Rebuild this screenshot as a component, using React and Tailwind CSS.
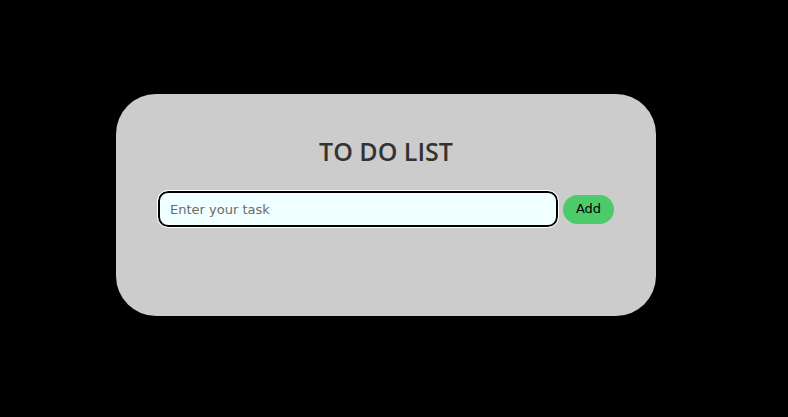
import React, { useState } from 'react';

const App = () => {
  const [task, setTask] = useState('');

  return (
    <div className="min-h-screen w-full bg-black pt-[94px]">
      <div className="ml-[116px] w-[540px] h-[222px] bg-[#cccccc] rounded-[40px] flex flex-col items-center pt-[39px]">
        <h1
          className="text-[25px] font-semibold text-[#333333] leading-[36px]"
          style={{ fontFamily: '"Open Sans", sans-serif' }}
        >
          TO DO LIST
        </h1>
        <div className="flex items-center gap-[5px] mt-[22px]">
          <input
            value={task}
            onChange={(e) => setTask(e.target.value)}
            placeholder="Enter your task"
            className="w-[400px] h-[36px] bg-[#f0ffff] border-2 border-black rounded-[10px] outline outline-1 outline-white px-[10px] text-[13px] text-black placeholder:text-[#6b6b6b]"
            style={{ fontFamily: '"DejaVu Sans", sans-serif' }}
          />
          <button
            className="w-[51px] h-[29px] rounded-full bg-[#4ccb6b] text-[13px] text-black"
            style={{ fontFamily: '"DejaVu Sans", sans-serif' }}
          >
            Add
          </button>
        </div>
      </div>
    </div>
  );
};

export default App;
